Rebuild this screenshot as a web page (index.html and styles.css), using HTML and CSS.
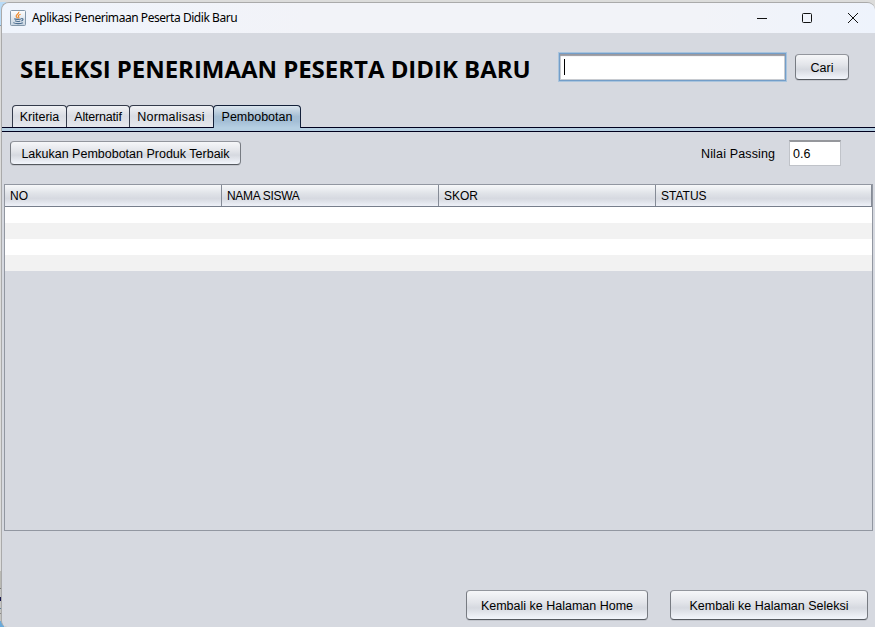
FILE: index.html
```html
<!DOCTYPE html>
<html lang="id">
<head>
<meta charset="utf-8">
<title>Aplikasi Penerimaan Peserta Didik Baru</title>
<link rel="stylesheet" href="styles.css">
</head>
<body>
<div class="desktop">
  <div class="behind"><i class="strip-top"></i><i class="strip-bottom"></i></div>
  <main class="window">
    <header class="titlebar">
      <svg class="java" viewBox="0 0 16 16">
        <defs><linearGradient id="g" x2="0" y2="1"><stop offset="0" stop-color="#fff"/><stop offset="1" stop-color="#c6d3e0"/></linearGradient></defs>
        <rect x=".5" y=".5" width="15" height="15" rx="1" fill="url(#g)" stroke="#8297aa"/>
        <path d="M8.8 1.8C9.5 4 5.6 4.5 6.2 6.3 6.4 7.1 7.2 7.5 7.6 8.3M10.6 4.2C8.6 5 7.7 5.9 8.7 6.9 9.2 7.5 8.9 8 8.5 8.4" fill="none" stroke="#ee8a2c" stroke-width="1.2"/>
        <path d="M4.2 8.8C5.5 9.5 9.5 9.5 11 8.9M5 10.8C6.5 11.5 9 11.5 10.3 10.9M11.2 8.6C13.8 8.2 13.4 10.3 11.3 11M3.3 12.6C5.5 14 10.5 13.9 12.8 12.7" fill="none" stroke="#4c6f91" stroke-width="1.1"/>
      </svg>
      <span class="caption">Aplikasi Penerimaan Peserta Didik Baru</span>
      <svg class="controls" viewBox="0 0 104 12" fill="none" stroke="#111">
        <path d="M1 6.5H11"/><rect x="46.5" y="1.5" width="9" height="9" rx="1"/><path d="M92 1L102 11M102 1L92 11"/>
      </svg>
    </header>
    <section class="heading">
      <h1>SELEKSI PENERIMAAN PESERTA DIDIK BARU</h1>
      <div class="search"><i class="caret"></i></div>
      <button class="btn cari">Cari</button>
    </section>
    <nav class="tabs">
      <span class="tab t1">Kriteria</span><span class="tab t2">Alternatif</span><span class="tab t3">Normalisasi</span><span class="tab t4 active">Pembobotan</span>
    </nav>
    <div class="tabline"></div>
    <section class="tools">
      <button class="btn process">Lakukan Pembobotan Produk Terbaik</button>
      <span class="label">Nilai Passing</span>
      <div class="field">0.6</div>
    </section>
    <section class="table">
      <div class="thead"><span>NO</span><span class="c2">NAMA SISWA</span><span>SKOR</span><span>STATUS</span></div>
      <div class="row"></div><div class="row"></div><div class="row"></div><div class="row"></div>
    </section>
    <footer class="actions">
      <button class="btn home">Kembali ke Halaman Home</button>
      <button class="btn back">Kembali ke Halaman Seleksi</button>
    </footer>
  </main>
</div>
</body>
</html>
```
FILE: styles.css
```css
* { box-sizing: border-box; }
body { margin: 0; font: 12.5px/16px "Liberation Sans", Arial, sans-serif; color: #000; }
.desktop { display: flex; width: 875px; height: 627px; padding-top: 2px; background: #dcdcdb; overflow: hidden; position: relative; }
.behind { position: absolute; left: 0; top: 0; width: 6px; height: 627px; }
.strip-top { position: absolute; top: 2px; left: 0; width: 6px; height: 24px; background: #b9dbf7; border-bottom: 1px solid #7d9cb4; }
.strip-bottom { position: absolute; top: 571px; left: 0; width: 4px; height: 56px; background: linear-gradient(#b9b9b3 0 17px, #777 17px 18px, #c3c3c0 18px 26px, #17174e 26px 30px, #c3c3c0 30px 37px, #5d7f9c 37px 38px, #c3c3c0 38px 42px, #888 42px 43px, #c3c3c0 43px 50px, #69a9da 50px); }
.window { position: relative; display: flex; flex-direction: column; flex: none; width: 874px; height: 625px; margin-left: 1px; border: 1px solid #aaa; border-right: 0; border-bottom: 0; border-radius: 8px 8px 0 6px; background: #d6d9e0; overflow: hidden; }
.titlebar { display: flex; align-items: center; flex: none; height: 30px; padding-left: 8px; background: linear-gradient(90deg, #eff4fc, #f2f3f8 35%, #f2f3f8 80%, #eef3fc); }
.java { width: 16px; height: 16px; }
.caption { margin-left: 6px; font: 12px/16px "Noto Sans", sans-serif; letter-spacing: -.45px; white-space: nowrap; }
.controls { width: 104px; height: 12px; margin-left: auto; margin-right: 15px; }
.heading { display: flex; flex: none; height: 72px; padding: 19px 0 0 18px; }
h1 { width: 538px; margin: 0; font: bold 24px/33px "Open Sans", "Noto Sans", sans-serif; letter-spacing: -.03px; white-space: nowrap; }
.search { flex: none; width: 229px; height: 30px; border: 1px solid #a9c4dd; box-shadow: inset 0 0 0 1px #739ec9, inset 0 3px 1px #9999a0, inset 0 0 0 2px #c8cbd0; background: #fff; padding: 6px 0 0 5px; }
.caret { display: block; width: 1px; height: 16px; background: #000; }
.btn { flex: none; margin: 0; padding: 1px 0 0; border: 1px solid; border-color: #93969d #777b82 #55595f; border-radius: 4px; background: linear-gradient(#f6f7f9, #e3e5ea 40%, #d6d9e0 60%, #f3f6fc); font: 12.5px/16px "Liberation Sans", Arial, sans-serif; color: #000; white-space: nowrap; box-shadow: 0 1px #c2c5cc; }
.cari { width: 54px; height: 26px; margin: 2px 0 0 8px; }
.tabs { display: flex; flex: none; height: 22px; padding-left: 10px; }
.tab { height: 22px; border: 1px solid #343b4b; border-bottom: 0; border-radius: 4px 4px 0 0; padding-top: 3px; text-align: center; background: linear-gradient(#f1f2f5, #d9dce3 48%, #e6e8ed); white-space: nowrap; margin-right: -1px; }
.t1 { width: 55px; }
.t2 { width: 64px; letter-spacing: -.2px; }
.t3 { width: 85px; letter-spacing: .2px; padding-right: 1px; }
.t4 { width: 88px; }
.active { position: relative; height: 23px; border-color: #14213a; background: linear-gradient(#dbe5ee, #a5bed3 48%, #a4bfd6 70%, #b6cfe3); }
.tabline { flex: none; height: 5px; border-top: 1px solid #00001e; border-bottom: 1px solid #00001e; background: #b5cfe2; }
.tools { display: flex; flex: none; height: 52px; padding: 8px 0 0 8px; }
.process { width: 231px; height: 24px; margin-top: 1px; }
.label { width: 88px; margin: 6px 0 0 460px; letter-spacing: .15px; white-space: nowrap; }
.field { width: 52px; height: 26px; border: 1px solid #c0c3c9; border-top: 2px solid #95979c; background: #fff; padding: 4px 0 0 3px; }
.table { flex: none; width: 869px; height: 347px; margin-left: 2px; border: 1px solid #9297a1; }
.thead { display: grid; grid-template-columns: repeat(4, 217px); width: 867px; height: 22px; border-bottom: 1px solid #777e8b; background: linear-gradient(#f7f8fa, #e0e3e8 40%, #d6d9e0 65%, #eef1f8); }
.thead span { padding: 3px 0 0 5px; border-right: 1px solid #858b96; font-size: 12px; }
.thead .c2 { letter-spacing: -.3px; }
.thead span:last-child { width: 216px; }
.row { height: 16px; background: #fff; }
.row:nth-child(odd) { background: #f2f2f2; }
.actions { display: flex; justify-content: flex-end; gap: 22px; flex: none; padding: 59px 7px 0 0; }
.home { width: 182px; height: 30px; }
.back { width: 198px; height: 30px; }
```
